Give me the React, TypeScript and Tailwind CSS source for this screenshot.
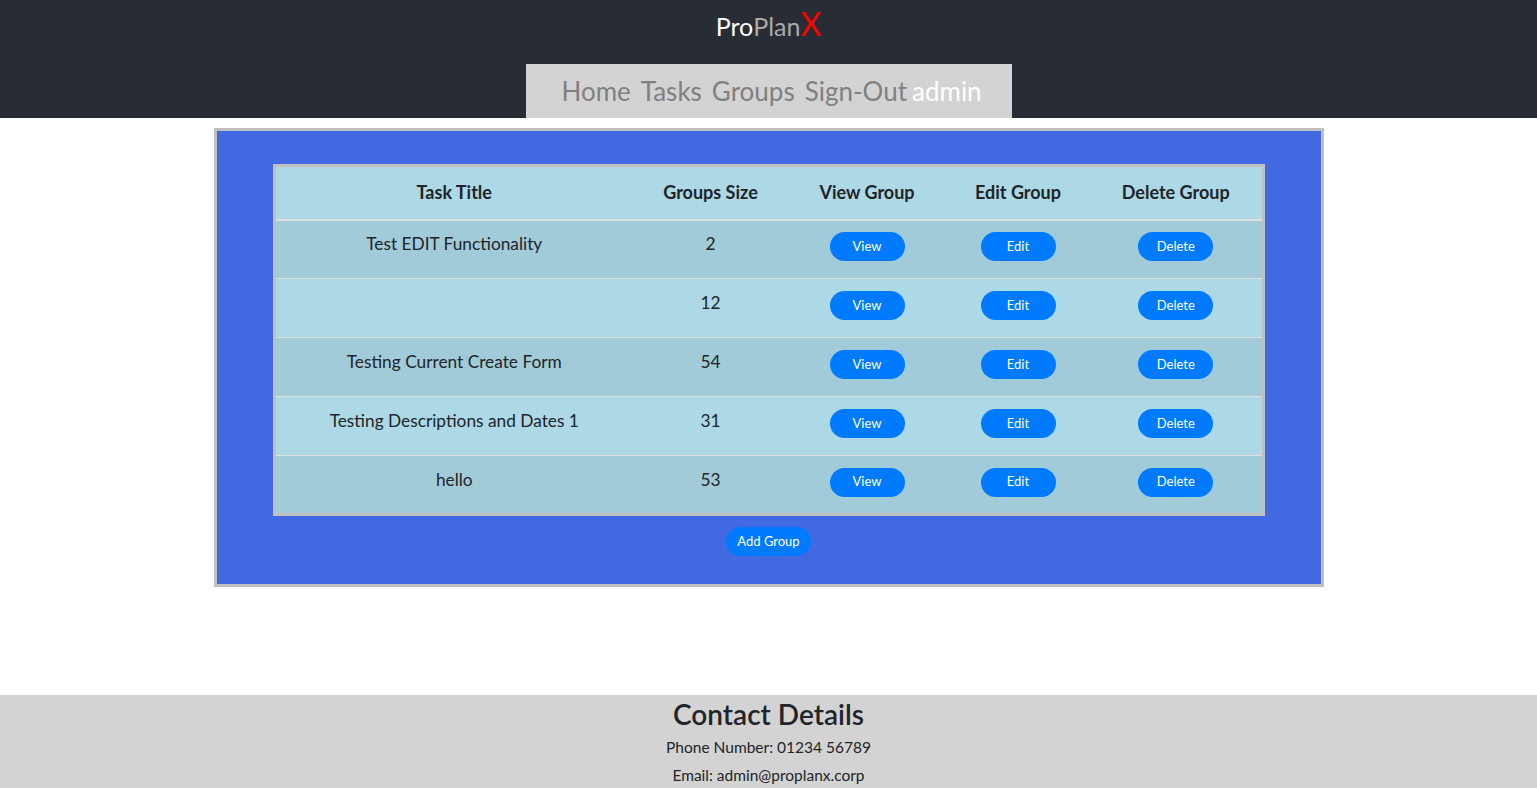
const rows = [
  { title: "Test EDIT Functionality", size: 2 },
  { title: "", size: 12 },
  { title: "Testing Current Create Form", size: 54 },
  { title: "Testing Descriptions and Dates 1", size: 31 },
  { title: "hello", size: 53 },
];

function Pill({ label }: { label: string }) {
  return (
    <button className="h-[29px] w-[75px] rounded-full bg-[#007bff] text-[13px] text-white">
      {label}
    </button>
  );
}

export default function App() {
  return (
    <div className="min-h-screen bg-white font-['Lato','Liberation_Sans',sans-serif] text-[#212529]">
      <header className="flex h-[118px] flex-col items-center bg-[#282c34]">
        <div className="mt-[10px] flex items-end leading-none">
          <span className="text-[25px] text-white">Pro</span>
          <span className="text-[25px] text-[#a9a9a9]">Plan</span>
          <span className="text-[32px] leading-[0.9] text-[#ff0000]">X</span>
        </div>
        <nav className="mt-auto flex h-[54px] w-[486px] items-center gap-[10px] bg-[#d3d3d3] pl-[36px] text-[26px] text-[#808080]">
          <a>Home</a>
          <a>Tasks</a>
          <a>Groups</a>
          <a>Sign-Out</a>
          <span className="-ml-[5px] text-white">admin</span>
        </nav>
      </header>

      <main className="mx-auto mt-[10px] w-[1110px] border-[3px] border-[#c0c0c0] bg-[#4169e1] px-[56px] pt-[33px] pb-[28px]">
        <table className="w-full border-[3px] border-[#c0c0c0]">
          <thead>
            <tr className="h-[54px] border-b-2 border-[#e0e0e0] bg-[#add8e6] text-[18px] font-bold">
              <th className="w-[359px]">Task Title</th>
              <th className="w-[155px]">Groups Size</th>
              <th className="w-[158px]">View Group</th>
              <th className="w-[144px]">Edit Group</th>
              <th>Delete Group</th>
            </tr>
          </thead>
          <tbody>
            {rows.map((r, i) => (
              <tr
                key={i}
                className={
                  "h-[59px] border-b border-[#e0e0e0] last:border-b-0 text-center text-[17.3px] " +
                  (i % 2 === 0 ? "bg-[#a2cbd9]" : "bg-[#add8e6]")
                }
              >
                <td className="pb-[10px]">{r.title}</td>
                <td className="pb-[10px]">{r.size}</td>
                <td className="pb-[5px]"><Pill label="View" /></td>
                <td className="pb-[5px]"><Pill label="Edit" /></td>
                <td className="pb-[5px]"><Pill label="Delete" /></td>
              </tr>
            ))}
          </tbody>
        </table>
        <div className="mt-[11px] flex justify-center">
          <button className="h-[29px] rounded-full bg-[#007bff] px-[11px] text-[13px] text-white">
            Add Group
          </button>
        </div>
      </main>

      <footer className="mt-[108px] flex flex-col items-center bg-[#d3d3d3] pt-[3px] pb-[4px]">
        <h3 className="text-[28px] font-semibold leading-[1.2]">Contact Details</h3>
        <p className="mt-[1px] text-[15.5px] leading-[28px]">Phone Number: 01234 56789</p>
        <p className="text-[15.5px] leading-[28px]">Email: admin@proplanx.corp</p>
      </footer>
    </div>
  );
}
